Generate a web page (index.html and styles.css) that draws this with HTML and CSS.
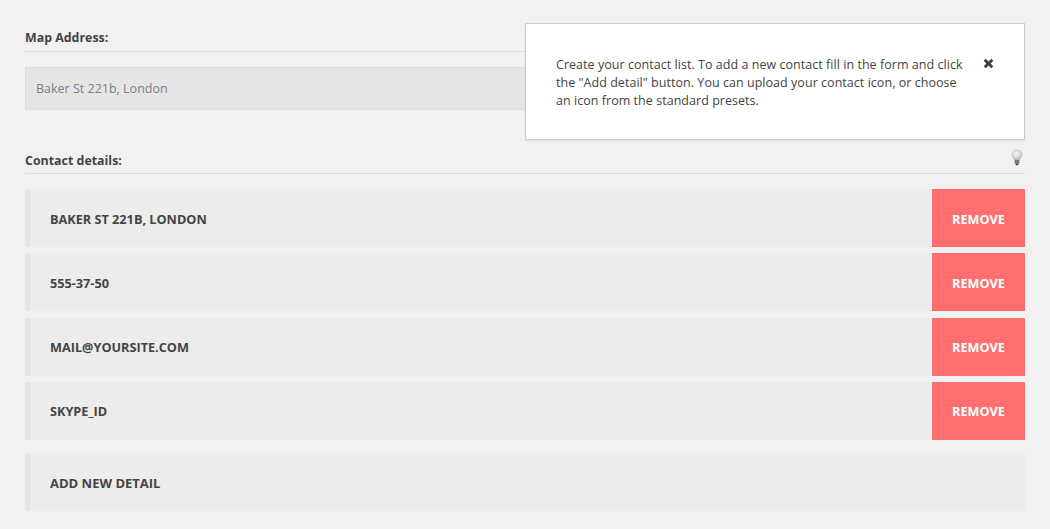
FILE: index.html
```html
<!DOCTYPE html>
<html lang="en">
<head>
<meta charset="utf-8">
<title>Contact details</title>
<link rel="stylesheet" href="styles.css">
</head>
<body>
<main class="page">
  <section class="map">
    <h2 class="heading">Map Address:</h2>
    <div class="address">Baker St 221b, London</div>
  </section>
  <section class="contacts">
    <h2 class="heading">Contact details:
      <svg class="bulb" width="14" height="18" viewBox="0 0 14 18" aria-hidden="true">
        <defs>
          <radialGradient id="glass" cx="0.45" cy="0.35" r="0.7">
            <stop offset="0" stop-color="#fafafa"/>
            <stop offset="0.6" stop-color="#d4d4d6"/>
            <stop offset="1" stop-color="#a9a9ad"/>
          </radialGradient>
        </defs>
        <path d="M7 1C3.900 1 2 3.100 2 5.700c0 2.200 1.600 3.400 2.400 5.300h5.200C10.400 9.100 12 7.900 12 5.700 12 3.100 10.100 1 7 1z" fill="url(#glass)" stroke="#bdbdc0" stroke-width=".6"/>
        <rect x="4.600" y="11" width="4.800" height="3.600" fill="#77777a"/>
        <rect x="5.500" y="14.500" width="3" height="1.800" rx=".8" fill="#3c3c3e"/>
      </svg>
    </h2>
    <ul class="list">
      <li class="row"><span class="label">Baker St 221b, London</span><button class="remove">Remove</button></li>
      <li class="row"><span class="label">555-37-50</span><button class="remove">Remove</button></li>
      <li class="row row-late"><span class="label">mail@yoursite.com</span><button class="remove">Remove</button></li>
      <li class="row row-late"><span class="label">skype_id</span><button class="remove">Remove</button></li>
    </ul>
    <div class="row add"><span class="label">Add new detail</span></div>
  </section>
</main>
<aside class="tip">
  <p class="tip-text">Create your contact list. To add a new contact fill in the form and click the "Add detail" button. You can upload your contact icon, or choose an icon from the standard presets.</p>
  <svg class="close" width="11" height="11" viewBox="0 0 10 10" aria-hidden="true">
    <path d="M2.500.6 5 3.100 7.500.6 9.400 2.500 6.900 5 9.400 7.500 7.500 9.400 5 6.900 2.500 9.400.6 7.500 3.100 5 .6 2.500z" fill="#3f3f3f"/>
  </svg>
</aside>
</body>
</html>
```
FILE: styles.css
```css
* { box-sizing: border-box; }
html, body { margin: 0; height: 529px; overflow: hidden; }
body {
  background: #f1f1f1;
  color: #444;
  font-family: "Open Sans", "Liberation Sans", sans-serif;
  font-size: 12.5px;
  position: relative;
}
.page { padding: 28px 25px 0; }
.heading {
  position: relative;
  margin: 0;
  height: 24px;
  font-size: 12.4px;
  line-height: 20px;
  font-weight: 700;
  color: #444;
  border-bottom: 1px solid #ddd;
}
.address {
  margin-top: 15px;
  height: 43px;
  padding: 0 10px;
  line-height: 41px;
  background: #e5e5e5;
  border: 1px solid #ddd;
  color: #7b7f86;
}
.contacts { margin-top: 41px; }
.contacts .heading { height: 23px; }
.bulb { position: absolute; right: 1px; top: -2px; }
.list { list-style: none; margin: 15px 0 0; padding: 0; display: flex; flex-direction: column; gap: 6px; }
.row {
  display: flex;
  justify-content: space-between;
  align-items: stretch;
  height: 58px;
  background: #ececec;
  border-left: 5px solid #e5e5e5;
}
.label {
  padding-left: 20px;
  line-height: 60px;
  font-size: 12.7px;
  font-weight: 700;
  text-transform: uppercase;
  color: #444;
}
.remove {
  width: 93px;
  border: 0;
  padding: 1px 0 0;
  background: #ff6f6f;
  color: #fff;
  font: 700 12.7px "Open Sans", "Liberation Sans", sans-serif;
  text-transform: uppercase;
}
.row-late:nth-child(3) { margin-top: 1px; }
.row-late .label { line-height: 58px; }
.row-late .remove { padding: 0 0 1px; }
.add { margin-top: 13px; }
.add .label { font-size: 13px; }
.tip {
  position: absolute;
  left: 525px;
  top: 23px;
  width: 500px;
  height: 117px;
  padding: 32px 30px 0 30px;
  background: #fff;
  border: 1px solid #ccc;
  box-shadow: 0 1px 2px rgba(0,0,0,.08);
}
.tip-text { margin: 0; width: 412px; line-height: 18px; letter-spacing: .04px; color: #444; }
.close { position: absolute; left: 457px; top: 34px; }
```
